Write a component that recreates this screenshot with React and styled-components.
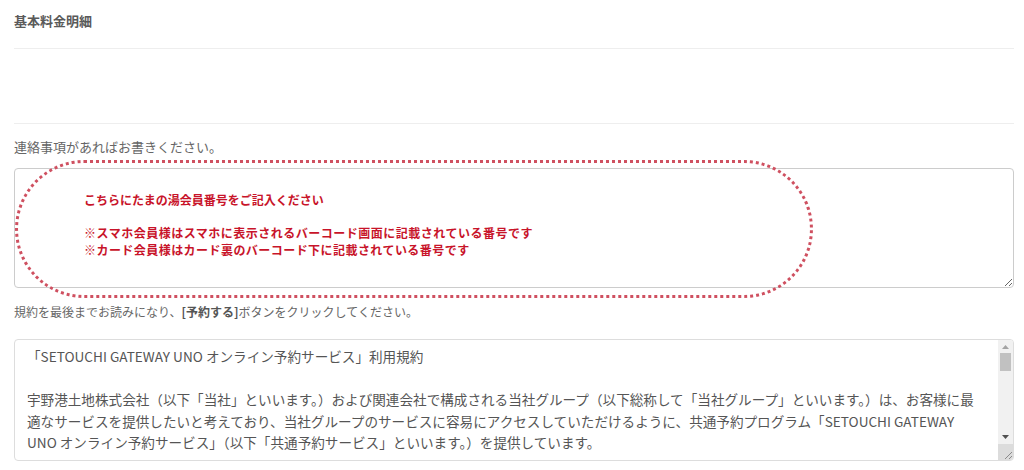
import React from 'react'
import styled, { createGlobalStyle } from 'styled-components'

const Global = createGlobalStyle`
html, body {
    margin: 0;
    padding: 0;
    background: #fff;
}
body {
    font-family: "Noto Sans CJK JP", "Noto Sans", sans-serif;
    color: #555;
}
`

const Page = styled.div`
padding: 0 10px 0 14px;
width: 1000px;
`

const SectionTitle = styled.div`
font-size: 13px;
font-weight: bold;
color: #5a5a5a;
line-height: 20px;
padding: 11px 0 17px;
border-bottom: 1px solid #eee;
`

const EmptyBlock = styled.div`
height: 74px;
border-bottom: 1px solid #eee;
`

const Label = styled.div`
font-size: 13px;
line-height: 20px;
color: #666;
margin: 13px 0 11px;
`

const FieldWrap = styled.div`
position: relative;
`

const TextArea = styled.textarea`
display: block;
box-sizing: border-box;
width: 100%;
height: 120px;
margin: 0;
padding: 6px 12px;
border: 1px solid #ccc;
border-radius: 4px;
font-family: "Noto Sans CJK JP", sans-serif;
font-size: 13px;
line-height: 21.5px;
color: #555;
background: #fff;
resize: vertical;
outline: none;
`

const Oval = styled.div`
position: absolute;
left: 1px;
top: -8px;
width: 798px;
height: 138px;
box-sizing: border-box;
border: 3px dotted #cf5060;
border-radius: 70px;
pointer-events: none;
`

const Notice = styled.div`
position: absolute;
left: 70px;
top: 24px;
color: #c8142a;
font-size: 12px;
font-weight: 600;
line-height: 16.5px;
pointer-events: none;
`

const NoticeLine = styled.div`
letter-spacing: ${p => p.$ls || 0}px;
`

const Gap = styled.div`
height: 16.5px;
`

const Note = styled.div`
font-size: 12px;
line-height: 18px;
color: #666;
margin: 15px 0 18px;

b {
    font-weight: bold;
    color: #555;
}
`

const TermsFrame = styled.div`
display: flex;
box-sizing: border-box;
height: 122px;
border: 1px solid #ddd;
border-radius: 4px;
overflow: hidden;
background: #fff;
`

const TermsText = styled.textarea`
flex: 1;
min-width: 0;
margin: 0;
border: 0;
padding: 6px 4px 6px 12px;
font-family: "Noto Sans CJK JP", sans-serif;
font-size: 13.6px;
line-height: 21.5px;
color: #555;
background: transparent;
white-space: pre;
overflow: hidden;
resize: none;
outline: none;
`

const ScrollBar = styled.div`
flex: 0 0 15px;
display: flex;
flex-direction: column;
background: #f1f1f1;
`

const ArrowBtn = styled.div`
flex: 0 0 ${p => p.$h}px;
display: flex;
align-items: center;
justify-content: center;
`

const Track = styled.div`
flex: 1;
padding: 0 2px;
`

const Thumb = styled.div`
height: 18px;
background: #c1c1c1;
`

const Resizer = styled.div`
flex: 0 0 16px;
background: #dcdcdc;
display: flex;
align-items: flex-end;
justify-content: flex-end;
`

const Arrow = ({ up, color }) =>
    <svg width="7" height="4" viewBox="0 0 7 4">
        <polygon points={up ? '3.5,0 7,4 0,4' : '0,0 7,0 3.5,4'} fill={color} />
    </svg>

const Grip = () =>
    <svg width="10" height="10" viewBox="0 0 10 10">
        <line x1="9" y1="2" x2="2" y2="9" stroke="#8a8a8a" strokeWidth="1" />
        <line x1="9" y1="6" x2="6" y2="9" stroke="#8a8a8a" strokeWidth="1" />
    </svg>

const terms = [
    '「SETOUCHI GATEWAY UNO オンライン予約サービス」利用規約',
    '',
    '宇野港土地株式会社（以下「当社」といいます。）および関連会社で構成される当社グループ（以下総称して「当社グループ」といいます。）は、お客様に最',
    '適なサービスを提供したいと考えており、当社グループのサービスに容易にアクセスしていただけるように、共通予約プログラム「SETOUCHI GATEWAY',
    'UNO オンライン予約サービス」（以下「共通予約サービス」といいます。）を提供しています。',
    '',
    '本規約は、共通予約サービスの利用に関する条件を定めるものです。お客様は、本規約に同意のうえ、共通予約サービスをご利用ください。',
].join('\n')

const App = () => {
    return <Page>
        <Global />
        <SectionTitle>基本料金明細</SectionTitle>
        <EmptyBlock />
        <Label>連絡事項があればお書きください。</Label>
        <FieldWrap>
            <TextArea defaultValue="" />
            <Oval />
            <Notice>
                <NoticeLine>こちらにたまの湯会員番号をご記入ください</NoticeLine>
                <Gap />
                <NoticeLine $ls={0.5}>※スマホ会員様はスマホに表示されるバーコード画面に記載されている番号です</NoticeLine>
                <NoticeLine $ls={0.45}>※カード会員様はカード裏のバーコード下に記載されている番号です</NoticeLine>
            </Notice>
        </FieldWrap>
        <Note>規約を最後までお読みになり、<b>[予約する]</b>ボタンをクリックしてください。</Note>
        <TermsFrame>
            <TermsText readOnly value={terms} />
            <ScrollBar>
                <ArrowBtn $h={13}><Arrow up color="#a3a3a3" /></ArrowBtn>
                <Track><Thumb /></Track>
                <ArrowBtn $h={14}><Arrow color="#505050" /></ArrowBtn>
                <Resizer><Grip /></Resizer>
            </ScrollBar>
        </TermsFrame>
    </Page>
}

export default App
